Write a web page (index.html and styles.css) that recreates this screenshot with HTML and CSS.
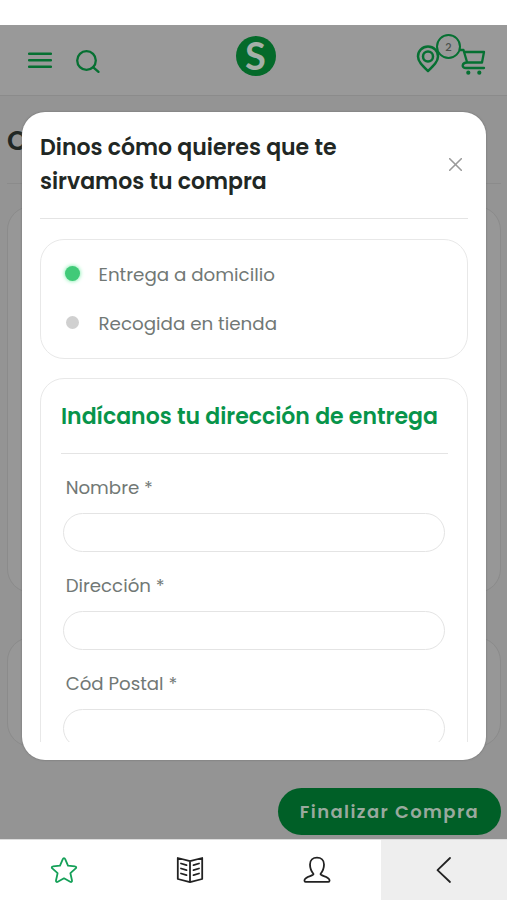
FILE: index.html
```html
<!DOCTYPE html>
<html lang="es">
<head>
<meta charset="utf-8">
<title>Compra</title>
<link rel="stylesheet" href="styles.css">
</head>
<body>
<div class="screen">
  <div class="status-strip"></div>
  <div class="page">
    <header class="topbar">
      <div class="group left">
        <svg class="menu" width="24" height="17" viewBox="0 0 24 17"><path d="M1 1.800h22M1 8.300h22M1 14.800h22"/></svg>
        <svg class="search" width="25" height="25" viewBox="0 0 25 25"><circle cx="10.5" cy="10.5" r="9.3"/><path d="M17.3 17.3l5.200 4.600"/></svg>
      </div>
      <div class="logo">S</div>
      <div class="group right">
        <svg class="pin" width="24" height="28" viewBox="0 0 24 28"><path d="M12 26C6.500 20.700 2 16.500 2 11.400a10 9.800 0 0 1 20 0C22 16.500 17.500 20.700 12 26Z"/><circle cx="12" cy="11.500" r="5"/></svg>
        <span class="badge">2</span>
        <svg class="cart" width="28" height="28" viewBox="0 0 28 28"><path d="M0 2h3.500l3.500 12M4.500 4H24l-2 10.500H7c-5 0-6 5.500-1 5.500h18"/><circle class="wheel" cx="8.300" cy="24.700" r="2.100"/><circle class="wheel" cx="19.300" cy="24.700" r="2.100"/></svg>
      </div>
    </header>
    <main class="content">
      <h1 class="page-title">C</h1>
      <div class="card tall"></div>
      <div class="card short"></div>
      <button class="checkout"><span>Finalizar Compra</span></button>
    </main>
  </div>
  <nav class="tabs">
    <span class="tab star"><svg width="28" height="28" viewBox="0 0 28 28"><path d="M14 2.200c.7 0 1 .5 1.300 1.200l2.700 6.300 7 .7c1.400.1 1.600 1.200.7 2l-5.300 4.800 1.600 7.300c.3 1.300-.7 1.900-1.800 1.300L14 22.300l-6.200 3.500c-1.100.6-2.100 0-1.800-1.300l1.600-7.300-5.300-4.800c-.9-.8-.7-1.900.7-2l7-.7 2.700-6.300c.3-.7.6-1.200 1.300-1.200Z"/></svg></span>
    <span class="tab"><svg width="28" height="28" viewBox="0 0 28 28"><path d="M14 5.200L1.800 2v21L14 26.200 26.200 23V2ZM14 5.200v21M5 7.500l5.500 1.700M5 12.500l5.500 1.700M5 17.500l5.500 1.700M23 7.500l-5.500 1.700M23 12.500l-5.500 1.700M23 17.500l-5.500 1.700"/></svg></span>
    <span class="tab"><svg width="28" height="28" viewBox="0 0 28 28"><path d="M10.500 18C7.600 14.500 7 11 7 8.500 7 4.300 10 1.700 14 1.700s7 2.600 7 6.800c0 2.500-.6 6-3.500 9.500-.2 2 8.500 2.300 9 6v.800c0 .6-.4 1-1 1h-23c-.6 0-1-.4-1-1v-.8c.5-3.700 9.200-4 9-6Z"/></svg></span>
    <span class="tab active"><svg width="28" height="28" viewBox="0 0 28 28"><path d="M20 2L7.500 14.200 20 26"/></svg></span>
  </nav>
  <section class="modal">
    <div class="modal-head">
      <h2>Dinos cómo quieres que te<br>sirvamos tu compra</h2>
      <svg class="close" width="13" height="13" viewBox="0 0 13 13"><path d="M.7.7l11.600 11.600M12.300.7L.7 12.300"/></svg>
    </div>
    <div class="modal-body">
      <div class="options">
        <label class="option"><i class="dot on"></i><span>Entrega a domicilio</span></label>
        <label class="option"><i class="dot"></i><span>Recogida en tienda</span></label>
      </div>
      <div class="address">
        <h3>Indícanos tu dirección de entrega</h3>
        <label class="field"><span>Nombre *</span><input type="text"></label>
        <label class="field"><span>Dirección *</span><input type="text"></label>
        <label class="field"><span>Cód Postal *</span><input type="text"></label>
      </div>
    </div>
  </section>
</div>
</body>
</html>
```
FILE: styles.css
```css
* { box-sizing: border-box; }
body { margin: 0; font-family: Poppins, Inter, "Liberation Sans", sans-serif; color: #212724; }
svg { display: block; fill: none; stroke: currentColor; stroke-linecap: round; stroke-linejoin: round; }
.screen { position: relative; width: 507px; height: 900px; overflow: hidden; display: flex; flex-direction: column; }
.status-strip { height: 25px; flex: none; background: #fff; }
.page { height: 814px; flex: none; background: #949494; overflow: hidden; }
.topbar { height: 71px; display: grid; grid-template-columns: 1fr 40px 1fr; padding: 0 20px 0 28px; background: #999; border-bottom: 1px solid #8b8b8b; color: #067032; }
.group { display: flex; align-items: flex-start; }
.left { padding-top: 25px; gap: 24px; }
.menu { margin-top: 2px; stroke-width: 2.400; }
.search { stroke-width: 2.300; }
.logo { width: 40px; height: 40px; margin: 11px 0 0 -2px; border-radius: 50%; background: #046a2a; color: #a5b0a8; font: 700 38px/38px Lato, sans-serif; text-align: center; }
.right { justify-content: flex-end; padding-top: 9px; }
.pin { margin-top: 11px; stroke-width: 2.500; }
.badge { width: 25px; height: 25px; margin-left: -4px; border: 2px solid #067032; border-radius: 50%; font-size: 11px; line-height: 22px; font-weight: 500; text-align: center; color: #4b514d; }
.cart { margin: 14px -1px 0 -1px; stroke-width: 2.300; }
.wheel { fill: currentColor; stroke: none; }
.content { padding: 0 6px 0 7px; }
.page-title { margin: 0 0 22px; height: 88px; padding-top: 25px; font-size: 27px; line-height: 40px; font-weight: 600; border-bottom: 1px solid #8b8b8b; }
.card { border: 1px solid #8b8b8b; border-radius: 24px; background: #979797; }
.tall { height: 387px; margin-bottom: 44px; }
.short { height: 110px; margin-bottom: 41px; }
.checkout { display: block; width: 223px; height: 47px; margin-left: auto; padding: 0; border: 0; border-radius: 24px; background: #005f27; color: #99a99e; font: 600 18px/46px Poppins, Inter, sans-serif; letter-spacing: 1.400px; }
.tabs { height: 61px; flex: none; display: grid; grid-template-columns: 127px 126px 128px 126px; background: #fff; border-top: 1px solid #ddd; }
.tab { display: grid; place-items: center; color: #222; }
.tab svg { stroke-width: 1.800; }
.star { color: #14a058; }
.active { background: #eee; }
.modal { position: absolute; left: 22px; top: 112px; width: 464px; height: 648px; padding: 0 18px 18px; border-radius: 23px; background: #fff; box-shadow: 0 0 2px #666; display: flex; flex-direction: column; }
.modal-head { height: 107px; flex: none; display: flex; justify-content: space-between; border-bottom: 1px solid #e4e4e4; margin-bottom: 20px; }
h2 { margin: 19px 0 0; font-size: 22px; line-height: 34px; font-weight: 600; white-space: nowrap; }
.close { margin: 46px 6px 0 0; color: #9a9a9a; stroke-width: 1.600; }
.modal-body { overflow: hidden; flex: 1; min-height: 0; }
.options { height: 120px; padding: 10px 25px 8px; border: 1px solid #e8e8e8; border-radius: 24px; }
.option { height: 49px; display: flex; align-items: center; gap: 19.500px; font-size: 18.300px; color: #717875; white-space: nowrap; }
.dot { width: 13px; height: 13px; flex: none; margin-top: -2px; border-radius: 50%; background: #d0d0d0; }
.on { width: 15px; height: 15px; margin: -2px -1px 0; background: #40ca78; box-shadow: 0 0 4px #62e999; }
.address { height: 600px; margin-top: 19px; padding: 0 19px 0 20px; border: 1px solid #e8e8e8; border-radius: 24px; }
h3 { margin: 0; height: 75px; font-size: 22px; line-height: 75px; font-weight: 600; color: #07944a; white-space: nowrap; border-bottom: 1px solid #e4e4e4; }
.field { display: block; height: 98px; padding: 16px 3px 0 2px; font-size: 18.200px; line-height: 36px; color: #717875; }
.field span { margin-left: 2.700px; }
.field input { display: block; width: 100%; height: 39px; margin-top: 7px; border: 1px solid #e4e4e4; border-radius: 20px; background: #fff; }
```
